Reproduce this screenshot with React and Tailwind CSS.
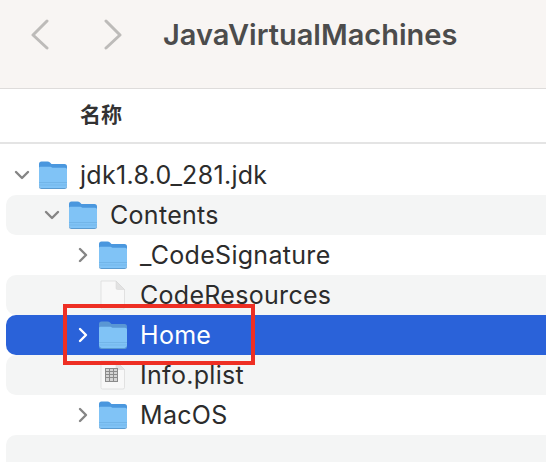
const font = { fontFamily: 'Inter, "Noto Sans CJK SC", sans-serif' };

function Folder({ selected }) {
  return (
    <svg width="30" height="30" viewBox="0 0 30 30" className="shrink-0">
      <path d="M1 4 Q1 1.5 3.5 1.5 H9.5 Q11 1.5 12 2.5 L13.5 4 H26.5 Q29 4 29 6.5 V14 H1 Z" fill={selected ? '#5a97d4' : '#4a97de'} />
      <path d="M1 8 Q1 6.7 2.5 6.7 H12.5 L14.5 7.7 H27 Q29 7.7 29 9.5 V25.5 Q29 28 26.5 28 H3.5 Q1 28 1 25.5 Z" fill="#80c3f6" />
      <rect x="1" y="22" width="28" height="1" fill="#72b5e8" />
      <rect x="1" y="24.6" width="28" height="0.8" fill="#72b5e8" />
      <path d="M1 26 Q1.5 28 3.5 28 H26.5 Q28.5 28 29 26 V27 Q29 29 26.5 29 H3.5 Q1 29 1 27 Z" fill="#5b9bd0" />
    </svg>
  );
}

function FileIcon({ table }) {
  return (
    <svg width="30" height="30" viewBox="0 0 30 30" className="shrink-0">
      <path d="M3 1 H18 L26.5 9.5 V27.5 Q26.5 29 25 29 H4.5 Q3 29 3 27.5 Z" fill="#f8f8f8" stroke="#dcdcdc" strokeWidth="0.8" />
      <path d="M18 1 V8 Q18 9.5 19.5 9.5 H26.5 Z" fill="#e2e2e2" stroke="#d4d4d4" strokeWidth="0.5" />
      {table && (
        <g stroke="#8b8b8b" strokeWidth="1" fill="#d4d4d4">
          <rect x="7.5" y="8.5" width="12" height="13" />
          <path d="M7.5 11.5 H19.5 M7.5 14.5 H19.5 M7.5 17.5 H19.5 M11.5 8.5 V21.5 M15.5 8.5 V21.5" fill="none" />
        </g>
      )}
    </svg>
  );
}

function Chevron({ dir, selected }) {
  const d = dir === 'down' ? 'M2 5 L8 11 L14 5' : 'M6 2 L12 8 L6 14';
  return (
    <svg width="16" height="16" viewBox="0 0 16 16" className="shrink-0">
      <path d={d} fill="none" stroke={selected ? '#ffffff' : '#858585'} strokeWidth="2.4" strokeLinecap="round" strokeLinejoin="round" />
    </svg>
  );
}

const rows = [
  { name: 'jdk1.8.0_281.jdk', pad: 'pl-[8px]', chevron: 'down', icon: 'folder' },
  { name: 'Contents', pad: 'pl-[38px]', chevron: 'down', icon: 'folder' },
  { name: '_CodeSignature', pad: 'pl-[68px]', chevron: 'right', icon: 'folder' },
  { name: 'CodeResources', pad: 'pl-[68px]', icon: 'file' },
  { name: 'Home', pad: 'pl-[68px]', chevron: 'right', icon: 'folder', selected: true },
  { name: 'Info.plist', pad: 'pl-[68px]', icon: 'table' },
  { name: 'MacOS', pad: 'pl-[68px]', chevron: 'right', icon: 'folder' },
];

function Row({ row, index }) {
  const bg = row.selected ? 'bg-[#2a62d9] text-white' : index % 2 === 1 ? 'bg-[#f4f5f5] text-[#2c2c2c]' : 'text-[#2c2c2c]';
  return (
    <div className={`ml-[6px] h-[40px] flex items-center rounded-l-[10px] ${row.pad} ${bg}`}>
      <div className="w-[16px] flex justify-center shrink-0">
        {row.chevron && <Chevron dir={row.chevron} selected={row.selected} />}
      </div>
      <div className="ml-[8px] mr-[12px]">
        {row.icon === 'folder' ? <Folder selected={row.selected} /> : <FileIcon table={row.icon === 'table'} />}
      </div>
      <span className="text-[25px] tracking-[0.3px] leading-none whitespace-nowrap">{row.name}</span>
    </div>
  );
}

export default function App() {
  return (
    <div className="relative w-[546px] h-[462px] overflow-hidden bg-white" style={font}>
      <div className="h-[89px] bg-[#f8f5f3] border-b border-[#dedcdb] flex items-center pb-[19px] pl-[30px]">
        <svg width="20" height="32" viewBox="0 0 20 32" className="shrink-0">
          <path d="M17 3 L3 17 L17 30" transform="translate(0,-1)" fill="none" stroke="#bdbbb9" strokeWidth="3" strokeLinecap="round" strokeLinejoin="round" />
        </svg>
        <svg width="20" height="32" viewBox="0 0 20 32" className="ml-[53px] shrink-0">
          <path d="M3 3 L17 17 L3 30" transform="translate(0,-1)" fill="none" stroke="#bdbbb9" strokeWidth="3" strokeLinecap="round" strokeLinejoin="round" />
        </svg>
        <span className="ml-[40px] text-[29px] font-semibold text-[#4c4c4c] leading-none whitespace-nowrap">JavaVirtualMachines</span>
      </div>
      <div className="h-[55px] border-b-2 border-[#e4e4e4] flex items-center pl-[80px] pb-[4px] text-[21px] font-semibold text-[#333333]" style={{ fontFamily: '"Noto Sans CJK SC", sans-serif' }}>
        名称
      </div>
      <div className="pt-[11px]">
        {rows.map((r, i) => <Row key={r.name} row={r} index={i} />)}
        <div className="ml-[6px] h-[40px] rounded-l-[10px] bg-[#f4f5f5]" />
      </div>
      <div className="absolute left-[63px] top-[304px] w-[192px] h-[61px] border-[4px] border-[#ee2f24]" />
    </div>
  );
}
